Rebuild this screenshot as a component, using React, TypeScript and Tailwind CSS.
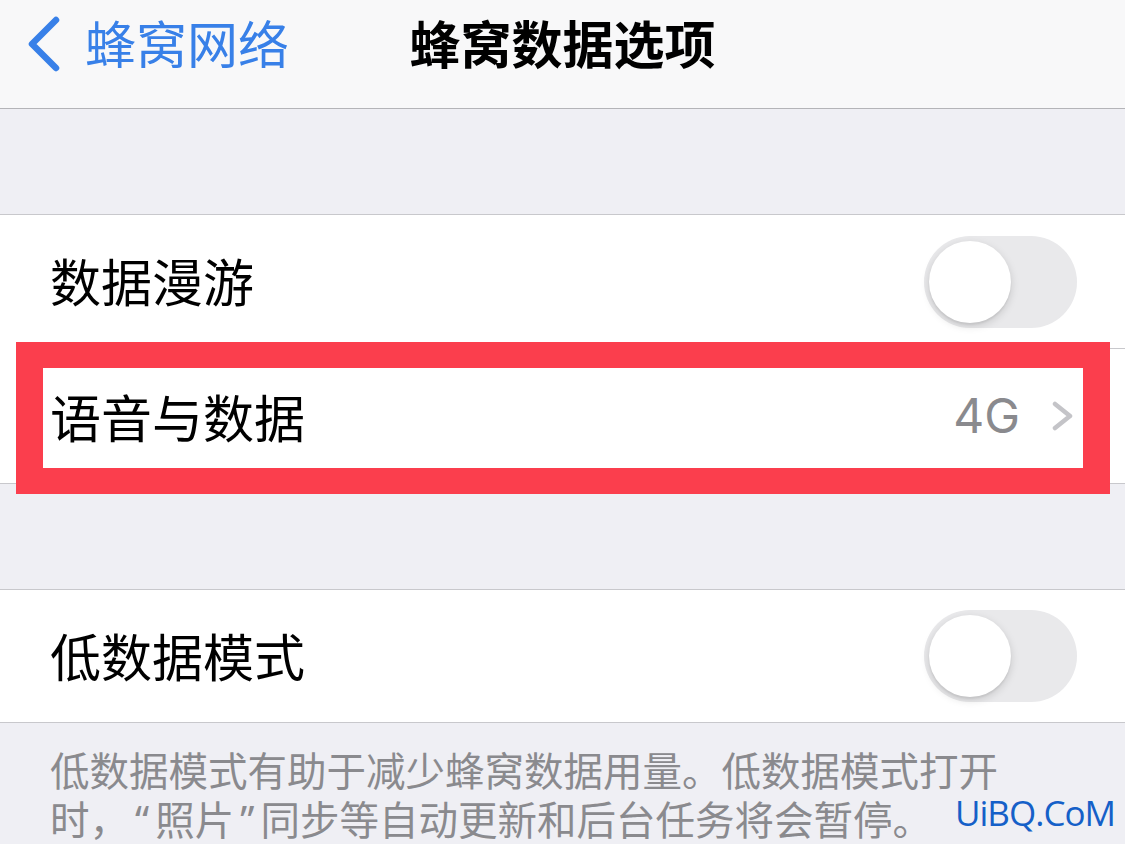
import React from 'react';

const cjk = "font-['Noto_Sans_CJK_SC','Noto_Sans',sans-serif]";

function Toggle() {
    return (
        <div className="w-[153px] h-[92px] rounded-full bg-[#e9e9eb] p-[5px] flex items-center">
            <div className="w-[82px] h-[82px] rounded-full bg-white shadow-[0_3px_8px_rgba(0,0,0,0.15),0_2px_2px_rgba(0,0,0,0.06)]" />
        </div>
    );
}

function Chevron({ className }: { className?: string }) {
    return (
        <svg viewBox="0 0 22 30" className={className} fill="none" stroke="currentColor" strokeWidth="4.5" strokeLinecap="round" strokeLinejoin="round">
            <path d="M3 3 L18 15 L3 27" />
        </svg>
    );
}

export default function App() {
    return (
        <div className={`relative min-h-screen bg-[#efeff4] ${cjk} overflow-hidden`}>
            {/* nav bar */}
            <div className="h-[109px] bg-[#f8f8f9] border-b border-[#b4b4b8] grid grid-cols-[1fr_auto_1fr] items-center">
                <div className="flex items-center pl-[27px] text-[#3880e8]">
                    <svg viewBox="0 0 34 56" className="w-[34px] h-[56px] -mt-[20px]" fill="none" stroke="currentColor" strokeWidth="6.5" strokeLinecap="round" strokeLinejoin="round">
                        <path d="M29 4 L5 28 L29 52" />
                    </svg>
                    <span className="ml-[24px] text-[51px] leading-none -mt-[24px]">蜂窝网络</span>
                </div>
                <h1 className="text-[51px] font-bold leading-none text-black -mt-[24px]">蜂窝数据选项</h1>
                <div />
            </div>

            <div className="h-[105px]" />

            {/* group 1 */}
            <div className="bg-white border-y border-[#c8c8cc]">
                <div className="h-[134px] ml-[50px] border-b border-[#c8c8cc] flex items-center justify-between pr-[48px]">
                    <span className="text-[51px] leading-none text-black -mt-[2px]">数据漫游</span>
                    <Toggle />
                </div>
                <div className="h-[134px] pl-[50px] pr-[51px] flex items-center justify-between">
                    <span className="text-[51px] leading-none text-black">语音与数据</span>
                    <div className="flex items-center gap-[32px]">
                        <span className="font-['Inter',sans-serif] text-[48px] leading-none text-[#8a8a8e]">4G</span>
                        <Chevron className="w-[22px] h-[30px] text-[#c4c4c8]" />
                    </div>
                </div>
            </div>

            <div className="h-[105px]" />

            {/* group 2 */}
            <div className="bg-white border-y border-[#c8c8cc]">
                <div className="h-[132px] pl-[50px] pr-[48px] flex items-center justify-between">
                    <span className="text-[51px] leading-none text-black -mt-[2px]">低数据模式</span>
                    <Toggle />
                </div>
            </div>

            <p className="pl-[50px] pt-[21px] text-[39.5px] leading-[49px] text-[#8a8a8e]">
                低数据模式有助于减少蜂窝数据用量。低数据模式打开<br />
                时，<span className="font-['Noto_Sans',sans-serif] px-[6px]">“</span>照片<span className="font-['Noto_Sans',sans-serif] px-[6px]">”</span>同步等自动更新和后台任务将会暂停。
            </p>

            {/* red highlight annotation */}
            <div className="absolute left-[16px] top-[342px] w-[1094px] h-[152px] border-x-[27px] border-y-[26px] border-[#fb3e4d]" />

            {/* watermark */}
            <span className="absolute left-[955px] top-[795px] font-['Open_Sans',sans-serif] text-[35px] leading-none tracking-[-1px] text-[#1560c8]">UiBQ.CoM</span>
        </div>
    );
}
